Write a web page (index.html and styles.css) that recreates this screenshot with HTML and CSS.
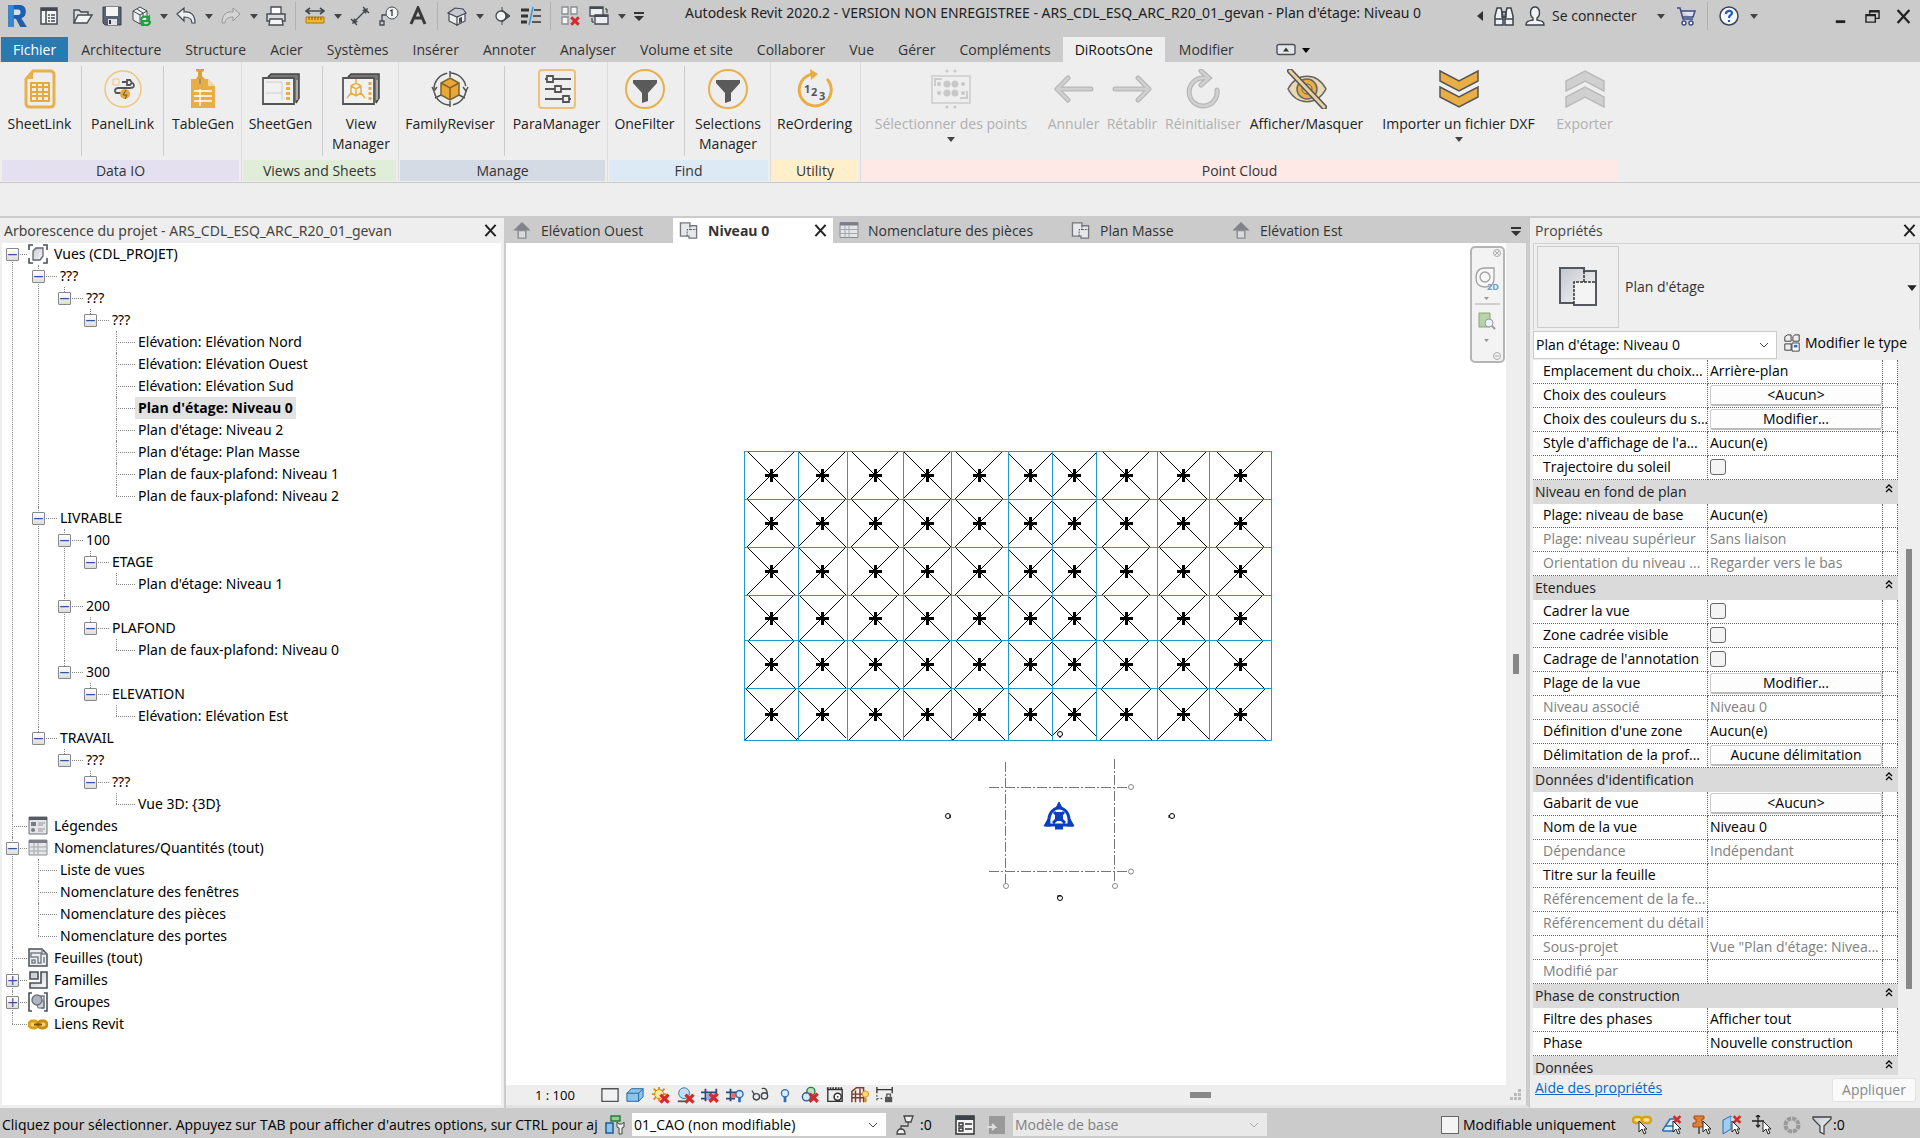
FILE: index.html
```html
<!DOCTYPE html>
<html lang="fr">
<head>
<meta charset="utf-8">
<title>Autodesk Revit 2020.2 - Plan d'étage: Niveau 0</title>
<link rel="stylesheet" href="styles.css">
</head>
<body>
<svg class="defs" width="0" height="0" aria-hidden="true">
  <defs>
    <linearGradient id="steel" x1="0" y1="0" x2="1" y2="1"><stop offset="0" stop-color="#c3c7cf"/><stop offset="1" stop-color="#fafafa"/></linearGradient>
    <symbol id="caret" viewBox="0 0 8 6"><path d="M0 1h8L4 6z" fill="currentColor"/></symbol>
    <symbol id="cross" viewBox="0 0 14 14"><path d="M1.500 1l11 12M12.500 1l-11 12" stroke="currentColor" stroke-width="2.200" fill="none"/></symbol>
    <symbol id="chevron" viewBox="0 0 10 6"><path d="M1 1l4 4 4-4" stroke="currentColor" fill="none"/></symbol>
    <symbol id="collapse" viewBox="0 0 8 9"><path d="M1 4l3-3 3 3M1 8l3-3 3 3" stroke="#000" stroke-width="1.300" fill="none"/></symbol>
    <symbol id="menu" viewBox="0 0 10 9"><path d="M0 0h10v2H0zM0 4h10L5 9z" fill="#333"/></symbol>
    <symbol id="redx" viewBox="0 0 8 8"><path d="M1 1l6 6M7 1l-6 6" stroke="#d42a2a" stroke-width="2.400" fill="none"/></symbol>
    <symbol id="pointer" viewBox="0 0 10 15"><path d="M1 1v11l3-3 2 5 2-1-2-4h3z" fill="#fff" stroke="#222"/></symbol>
    <symbol id="elev" viewBox="0 0 20 20"><path d="M10 1L1 10h5v3h8v-3h5z" fill="#808387"/><path d="M6 10h8v8H6z" fill="#d8dadd" stroke="#8a8c90" stroke-width="1.500"/></symbol>
    <symbol id="plan" viewBox="0 0 20 20"><path d="M1 2h10v3h7v13H10v-2H1z" fill="#e6e8ec" stroke="#74777d" stroke-width="1.400"/><path d="M11 5v4H8v7" fill="none" stroke="#4c5058" stroke-dasharray="2 1"/><path d="M11 9h7" stroke="#4c5058" stroke-dasharray="2 1"/></symbol>
    <symbol id="sched" viewBox="0 0 20 18"><path d="M1 1h18v15H1z" fill="#e4e5e8" stroke="#8a8c90"/><path d="M1 1h18v3H1z" fill="#7b7e84"/><path d="M6 4v12M10 4v12M1 8h18M1 12h18" stroke="#a5a8ad"/></symbol>
    <symbol id="funnel" viewBox="0 0 40 40"><circle cx="20" cy="20" r="19" fill="none" stroke="#e8b04a" stroke-width="2"/><path d="M8 11h24v3L23 24v8l-6 2V24L8 14z" fill="#5a5a5a"/></symbol>
  </defs>
</svg>

<header class="titlebar">
  <div class="quick">
    <button aria-label="Revit" class="qb logo"><svg viewBox="0 0 20 22"><path d="M2 1h10c4 0 6 2 6 6 0 3-1 5-4 6l5 8h-6L9 13.500H7V21H2z" fill="#1c5fae"/><path d="M7 5v5h4c3 0 3-5 0-5z" fill="#d2e2f2"/><path d="M2 1h5v20H2z" fill="#3b86cf"/></svg></button>
    <button aria-label="Accueil" class="qb"><svg viewBox="0 0 20 20"><path d="M2 2h16v16H2z" fill="#f4f4f4" stroke="#454a52" stroke-width="1.500"/><path d="M2 2h16v3H2z" fill="#454a52"/><path d="M7 5v13M9 9h2m1 0h4M9 12h2m1 0h4M9 15h2m1 0h4" stroke="#454a52" stroke-width="1.500"/></svg></button>
    <button aria-label="Ouvrir" class="qb wide"><svg viewBox="0 0 20 20"><path d="M1 17V4h5l2 2h7v3" fill="#ddd" stroke="#454a52" stroke-width="1.400"/><path d="M1 17L5 9h14l-5 8z" fill="#f4f4f4" stroke="#454a52" stroke-width="1.400"/></svg></button>
    <button aria-label="Enregistrer" class="qb"><svg viewBox="0 0 20 20"><path d="M1 1h18v18H3l-2-2z" fill="#5a6170" stroke="#3b414c"/><path d="M4 1h12v9H4z" fill="#f4f4f4"/><path d="M6 13h9v6H6z" fill="#e0e2e6"/><path d="M8 14v4" stroke="#333" stroke-width="2"/></svg></button>
    <button aria-label="Synchroniser" class="qb"><svg viewBox="0 0 20 20"><path d="M2 5l7-4 7 4v9l-7 4-7-4z" fill="#eceef0" stroke="#454a52"/><path d="M2 5l7 4 7-4M9 9v9M6 3l6 4v4" fill="none" stroke="#454a52"/><path d="M10 14a4 4 0 0 1 7-2l1-1v4h-4M19 15a4 4 0 0 1-7 3l-1 1v-4h4" fill="none" stroke="#1aa33c" stroke-width="2.200"/></svg></button>
    <svg class="tri"><use href="#caret"/></svg>
    <button aria-label="Annuler" class="qb"><svg viewBox="0 0 20 20"><path d="M1 8l7-6v4c7-1 11 3 11 11h-3c0-4-3-6-8-6v4z" fill="#eceef0" stroke="#454a52" stroke-width="1.200"/></svg></button>
    <svg class="tri"><use href="#caret"/></svg>
    <button aria-label="Rétablir" class="qb"><svg viewBox="0 0 20 20"><path d="M19 8l-7-6v4C5 5 1 9 1 17h3c0-4 3-6 8-6v4z" fill="#d5d5d5" stroke="#999"/></svg></button>
    <svg class="tri"><use href="#caret"/></svg>
    <button aria-label="Imprimer" class="qb"><svg viewBox="0 0 20 20"><path d="M5 8V1h10v7" fill="#fff" stroke="#454a52" stroke-width="1.300"/><path d="M1 8h18v7H1z" fill="#d8dade" stroke="#454a52" stroke-width="1.400"/><path d="M4 13h12l1 6H3z" fill="#f4f4f4" stroke="#454a52" stroke-width="1.300"/></svg></button>
    <i class="vsep"></i>
    <button aria-label="Mesurer" class="qb"><svg viewBox="0 0 20 20"><path d="M1 5h18M5 2L1 5l4 3M15 2l4 3-4 3" fill="none" stroke="#454a52" stroke-width="1.600"/><path d="M1 11h18v6H1z" fill="#f7b731" stroke="#a9780c"/><path d="M4 11v3m3-3v3m3-3v3m3-3v3m3-3v3" stroke="#7a5605"/></svg></button>
    <svg class="tri"><use href="#caret"/></svg>
    <button aria-label="Cote alignée" class="qb"><svg viewBox="0 0 20 20"><path d="M4 16L16 4M1 13l6 6M13 1l6 6" stroke="#454a52" stroke-width="1.400"/><path d="M2 18l2-6 4 4zM18 2l-6 2 4 4z" fill="#454a52"/></svg></button>
    <button aria-label="Étiquette" class="qb"><svg viewBox="0 0 20 20"><circle cx="13" cy="7" r="6" fill="#f4f4f4" stroke="#454a52"/><path d="M11 5l2-1v6" fill="none" stroke="#333" stroke-width="1.300"/><path d="M7 9H3v6M1 15h4v4H1z" fill="none" stroke="#454a52" stroke-width="1.300"/></svg></button>
    <button aria-label="Texte" class="qb"><svg viewBox="0 0 20 20"><path d="M3 18L10 2l7 16M6 12h8" fill="none" stroke="#3a3a3a" stroke-width="3"/></svg></button>
    <i class="vsep"></i>
    <button aria-label="Vue 3D par défaut" class="qb"><svg viewBox="0 0 20 20"><path d="M2 7l8 3v9l-8-4zM10 10l8-3v8l-8 4z" fill="#eceef0" stroke="#454a52" stroke-width="1.200"/><path d="M1 7l7-5 8 1 3 4-9 4z" fill="#c5c9d0" stroke="#454a52" stroke-width="1.200"/><path d="M12 12l3-1v5l-3 1z" fill="#454a52"/></svg></button>
    <svg class="tri"><use href="#caret"/></svg>
    <button aria-label="Coupe" class="qb"><svg viewBox="0 0 20 20"><path d="M10 1v18M10 4l8 6-8 6z" fill="#454a52" stroke="#454a52"/><circle cx="9" cy="10" r="5" fill="#f4f4f4" stroke="#454a52" stroke-width="1.300"/></svg></button>
    <button aria-label="Lignes fines" class="qb"><svg viewBox="0 0 20 20"><path d="M0 4h8M0 10h7M0 16h6" stroke="#333" stroke-width="3"/><path d="M13 4h7M12 10h8M11 16h9" stroke="#333" stroke-width="1.500"/><path d="M12 1L8 19" stroke="#3d95e0" stroke-width="1.500"/></svg></button>
    <i class="vsep"></i>
    <button aria-label="Fermer les vues inactives" class="qb"><svg viewBox="0 0 20 20"><path d="M2 1h6v7H2zM11 1h6v7h-6zM2 11h6v7H2z" fill="#f4f4f4" stroke="#8a8d93" stroke-width="1.300"/><use href="#redx" x="10" y="10" width="10" height="10"/></svg></button>
    <button aria-label="Changer de fenêtre" class="qb"><svg viewBox="0 0 20 20"><path d="M1 1h13v9H1zM6 9h13v9H6z" fill="#eceef0" stroke="#454a52" stroke-width="1.300"/><path d="M1 2h13M6 10h13" stroke="#454a52" stroke-width="2"/><path d="M16 3h2v4M3 12v4h2" stroke="#333" fill="none"/></svg></button>
    <svg class="tri"><use href="#caret"/></svg>
    <svg class="menu-glyph"><use href="#menu"/></svg>
  </div>
  <h1>Autodesk Revit 2020.2 - VERSION NON ENREGISTREE - ARS_CDL_ESQ_ARC_R20_01_gevan - Plan d'étage: Niveau 0</h1>
  <div class="account">
    <svg class="left-tri" viewBox="0 0 6 10"><path d="M6 0v10L0 5z" fill="#333"/></svg>
    <button aria-label="Rechercher" class="qb"><svg viewBox="0 0 20 20"><path d="M3 2h4l2 8v9H1v-9zM13 2h4l2 8v9h-8v-9z" fill="#f0f1f3" stroke="#3c424c" stroke-width="1.500"/><path d="M8 6h4v5H8zM1 13h8M11 13h8" fill="none" stroke="#3c424c" stroke-width="1.500"/></svg></button>
    <button class="login"><svg viewBox="0 0 20 20"><path d="M1 19c0-4 3-4 7-5v-2c-4-3-3-11 2-11s6 8 2 11v2c4 1 7 1 7 5z" fill="#f2f2f4" stroke="#3c424c" stroke-width="1.400"/></svg>Se connecter</button>
    <svg class="tri"><use href="#caret"/></svg>
    <button aria-label="App Store" class="qb"><svg viewBox="0 0 20 20"><path d="M1 2h3l3 11h10M5 5h14l-2 6H7" fill="#dfe3ee" stroke="#3d4c80" stroke-width="1.500"/><circle cx="8" cy="17" r="2" fill="#fff" stroke="#3d4c80" stroke-width="1.400"/><circle cx="15" cy="17" r="2" fill="#fff" stroke="#3d4c80" stroke-width="1.400"/></svg></button>
    <i class="vsep"></i>
    <button aria-label="Aide" class="qb"><svg viewBox="0 0 20 20"><circle cx="10" cy="10" r="9" fill="#f6f8fc" stroke="#3c4658" stroke-width="1.500"/><path d="M7 8c0-4 6-4 6-1 0 2-3 2-3 5M10 14v2" fill="none" stroke="#2458b8" stroke-width="2.200"/></svg></button>
    <svg class="tri"><use href="#caret"/></svg>
  </div>
  <div class="winctl">
    <button aria-label="Réduire"><svg viewBox="0 0 16 16"><path d="M3 12h10v3H3z" fill="#222"/></svg></button>
    <button aria-label="Restaurer"><svg viewBox="0 0 16 16"><path d="M5 5V2h10v8h-4M1 6h10v8H1z" fill="none" stroke="#222" stroke-width="1.500"/><path d="M5 2.500h10M1 6.500h10" stroke="#222" stroke-width="2.500"/></svg></button>
    <button aria-label="Fermer"><svg viewBox="0 0 14 14"><use href="#cross"/></svg></button>
  </div>
</header>

<nav class="tabs">
  <a class="file" href="#">Fichier</a><a href="#">Architecture</a><a href="#">Structure</a><a href="#">Acier</a><a href="#">Systèmes</a><a href="#">Insérer</a><a href="#">Annoter</a><a href="#">Analyser</a><a href="#">Volume et site</a><a href="#">Collaborer</a><a href="#">Vue</a><a href="#">Gérer</a><a href="#">Compléments</a><a class="active" href="#">DiRootsOne</a><a href="#">Modifier</a>
  <button aria-label="Réduire le ruban" class="minribbon"><svg viewBox="0 0 20 12"><rect x="1" y="1" width="18" height="10" rx="2" fill="#e4e6ea" stroke="#4a4f58" stroke-width="1.400"/><path d="M7 8l3-4 3 4z" fill="#333"/></svg><svg class="tri dark"><use href="#caret"/></svg></button>
</nav>

<section class="ribbon">
  <div class="panel p-data">
    <div class="tools">
      <button><svg viewBox="0 0 40 40"><path d="M13 2h17q4 0 4 4v28q0 4-4 4H10q-4 0-4-4V10z" fill="#eee" stroke="#e8b04a" stroke-width="3"/><path d="M13 2v8H6z" fill="#e8b04a"/><path d="M11 14h18v18H11zM17 14v18M23 14v18M11 18h18M11 23h18M11 27h18" fill="none" stroke="#e8a93a" stroke-width="2"/></svg>SheetLink</button>
      <button><svg viewBox="0 0 40 40"><circle cx="20" cy="20" r="18" fill="none" stroke="#efc67c" stroke-width="1.500"/><path d="M10 10h6v6h-6z" fill="none" stroke="#efc67c"/><path d="M19 13h5m0-2v5h3l2-2-2-3zM30 14q3 5-3 5H15q-5 1-2 5h6" fill="none" stroke="#555" stroke-width="1.800"/><circle cx="22" cy="25" r="5" fill="#e8a93a"/><path d="M23 21l-3 5h4l-2 4" stroke="#555" fill="none"/></svg>PanelLink</button>
      <button><svg viewBox="0 0 40 40"><path d="M8 10h17l7 7v22H8z" fill="#e8ae45"/><path d="M25 10v7h7z" fill="#f2d9a8"/><path d="M11 22h18M11 27h18M11 32h18M17 20v17" stroke="#fff" stroke-width="1.500"/><path d="M13 0h8v2l-2 1v4l3 3h-9l2-3V3l-2-1z" fill="#dba13c"/><path d="M17 10v5" stroke="#888" stroke-width="1.500"/></svg>TableGen</button>
    </div>
    <h2>Data IO</h2>
  </div>
  <div class="panel p-views">
    <div class="tools">
      <button><svg viewBox="0 0 40 40"><path d="M7 8l3-3h28v24l-3 5" fill="#777" stroke="#444" stroke-width="1.500"/><path d="M2 9h31v26H2z" fill="#f1f1f1" stroke="#555" stroke-width="1.800"/><path d="M5 13h16v18M5 24h16" stroke="#ccc" fill="none"/><path d="M27 13v20" stroke="#e8ae45" stroke-width="4" stroke-dasharray="3 2"/><path d="M36 11v20" stroke="#ddd"/></svg>SheetGen</button>
      <button><svg viewBox="0 0 40 40"><path d="M7 8l3-3h28v24l-3 5" fill="#777" stroke="#444" stroke-width="1.500"/><path d="M2 9h31v26H2z" fill="#f1f1f1" stroke="#555" stroke-width="1.800"/><path d="M10 17l5-3 5 3v7l-5 3-5-3zM10 17l5 3 5-3M15 20v7M15 14v-4M10 24l-4 5M20 24l4 5" stroke="#e8ae45" stroke-width="1.500" fill="none"/><path d="M29 13v20" stroke="#e8ae45" stroke-width="3" stroke-dasharray="3 2"/><path d="M36 11v20" stroke="#ddd"/></svg>View<br>Manager</button>
    </div>
    <h2>Views and Sheets</h2>
  </div>
  <div class="panel p-manage">
    <div class="tools">
      <button><svg viewBox="0 0 40 40"><circle cx="20" cy="20" r="16" fill="none" stroke="#555" stroke-width="1.500" stroke-dasharray="22 3"/><path d="M20 9l9 5v12l-9 5-9-5V14z" fill="#eca732" stroke="#7b6434" stroke-width="1.500"/><path d="M11 14l9 5 9-5M20 19v12" fill="none" stroke="#7b6434" stroke-width="1.500"/><path d="M20 2v6M20 32v6M5 29l6-3M35 29l-6-3M2 18l2 4 3-4M33 18l3 4 2-4" fill="none" stroke="#555" stroke-width="1.500"/></svg>FamilyReviser</button>
      <button><svg viewBox="0 0 40 40"><rect x="2" y="1" width="36" height="38" rx="3" fill="none" stroke="#efc078" stroke-width="2"/><path d="M8 10h26M8 20h26M8 30h26" stroke="#555" stroke-width="1.800"/><path d="M10 7h6v6h-6zM18 17h6v6h-6zM26 27h6v6h-6z" fill="#eee" stroke="#555" stroke-width="1.800"/></svg>ParaManager</button>
    </div>
    <h2>Manage</h2>
  </div>
  <div class="panel p-find">
    <div class="tools">
      <button><svg><use href="#funnel"/></svg>OneFilter</button>
      <button><svg><use href="#funnel"/></svg>Selections<br>Manager</button>
    </div>
    <h2>Find</h2>
  </div>
  <div class="panel p-utility">
    <div class="tools">
      <button><svg viewBox="0 0 40 40"><path d="M32 10a16 16 0 1 1-14-5" fill="none" stroke="#e8ae45" stroke-width="3"/><path d="M15 0l8 5-7 6z" fill="#e8ae45"/><text x="9" y="24" class="digits">1</text><text x="16" y="27" class="digits">2</text><text x="24" y="31" class="digits">3</text></svg>ReOrdering</button>
    </div>
    <h2>Utility</h2>
  </div>
  <div class="panel p-cloud">
    <div class="tools">
      <button disabled><svg viewBox="0 0 40 40"><path d="M1 7h38v27H1z" fill="none" stroke="#ccc" stroke-width="1.500"/><g fill="#c8c8c8"><circle cx="16" cy="15" r="3.500"/><circle cx="24" cy="15" r="3.500"/><circle cx="16" cy="24" r="3.500"/><circle cx="24" cy="24" r="3.500"/><circle cx="8" cy="15" r="2"/><circle cx="32" cy="15" r="2"/><circle cx="8" cy="24" r="2"/><circle cx="32" cy="24" r="2"/><circle cx="16" cy="2" r="1.500"/><circle cx="24" cy="2" r="1.500"/><circle cx="16" cy="38" r="1.500"/><circle cx="24" cy="38" r="1.500"/></g><path d="M4 17v-7h7M29 29h7v-7" fill="none" stroke="#ccc" stroke-width="2"/></svg>Sélectionner des points<svg class="tri"><use href="#caret"/></svg></button>
      <button disabled><svg viewBox="0 0 40 40"><path d="M37 20H4M14 9L3 20l11 11" fill="none" stroke="#b8b8b8" stroke-width="5" stroke-linecap="round" stroke-linejoin="round"/><path d="M37 20H4M14 9L3 20l11 11" fill="none" stroke="#d0d0d0" stroke-width="2.500" stroke-linecap="round"/></svg>Annuler</button>
      <button disabled><svg viewBox="0 0 40 40"><path d="M3 20h33M26 9l11 11-11 11" fill="none" stroke="#b8b8b8" stroke-width="5" stroke-linecap="round" stroke-linejoin="round"/><path d="M3 20h33M26 9l11 11-11 11" fill="none" stroke="#d0d0d0" stroke-width="2.500" stroke-linecap="round"/></svg>Rétablir</button>
      <button disabled><svg viewBox="0 0 40 40"><path d="M34 21a14 14 0 1 1-14-12h4M18 2l8 7-8 7" fill="none" stroke="#b8b8b8" stroke-width="5" stroke-linecap="round"/><path d="M34 21a14 14 0 1 1-14-12h4M18 2l8 7-8 7" fill="none" stroke="#d0d0d0" stroke-width="2.500" stroke-linecap="round"/></svg>Réinitialiser</button>
      <button><svg viewBox="0 0 40 40"><path d="M1 20C10 3 30 3 39 20 30 37 10 37 1 20z" fill="#ead8b4" stroke="#666" stroke-width="1.500"/><circle cx="20" cy="20" r="10" fill="#e8ae45" stroke="#666" stroke-width="1.500"/><circle cx="20" cy="20" r="5" fill="#edbe68" stroke="#666"/><path d="M3 2l34 36" stroke="#555" stroke-width="6" stroke-linecap="round"/><path d="M3 2l34 36" stroke="#e8d0a0" stroke-width="3" stroke-linecap="round"/></svg>Afficher/Masquer</button>
      <button><svg viewBox="0 0 40 40"><path d="M1 2l19 10L39 2v10L20 22 1 12zM1 18l19 10 19-10v10L20 38 1 28z" fill="#e8ae45" stroke="#555" stroke-width="1.500"/></svg>Importer un fichier DXF<svg class="tri"><use href="#caret"/></svg></button>
      <button disabled><svg viewBox="0 0 40 40"><path d="M1 22L20 12l19 10V12L20 2 1 12zM1 38l19-10 19 10V28L20 18 1 28z" fill="#d0d0d0" stroke="#bbb" stroke-width="1.500"/></svg>Exporter</button>
    </div>
    <h2>Point Cloud</h2>
  </div>
</section>
<div class="optionbar"></div>

<main class="workspace">
  <aside class="browser">
    <header class="dock"><h2>Arborescence du projet - ARS_CDL_ESQ_ARC_R20_01_gevan</h2><button aria-label="Fermer l'arborescence"><svg><use href="#cross"/></svg></button></header>
    <ul class="tree root">
      <li><div class="row"><button class="ex" aria-label="Réduire">−</button><svg class="ico" viewBox="0 0 20 20"><path d="M1 6V1h4M15 1h4v5M19 14v5h-4M5 19H1v-5" fill="none" stroke="#4a4f58" stroke-width="1.600"/><path d="M5 7l3-3h7v8l-3 4H5z" fill="url(#steel)" stroke="#5f6570" stroke-width="1.300"/></svg>Vues (CDL_PROJET)</div>
        <ul>
          <li><div class="row"><button class="ex" aria-label="Réduire">−</button>???</div>
            <ul><li><div class="row"><button class="ex" aria-label="Réduire">−</button>???</div>
              <ul><li><div class="row"><button class="ex" aria-label="Réduire">−</button>???</div>
                <ul>
                  <li><div class="row leaf">Elévation: Elévation Nord</div></li>
                  <li><div class="row leaf">Elévation: Elévation Ouest</div></li>
                  <li><div class="row leaf">Elévation: Elévation Sud</div></li>
                  <li><div class="row leaf"><b>Plan d'étage: Niveau 0</b></div></li>
                  <li><div class="row leaf">Plan d'étage: Niveau 2</div></li>
                  <li><div class="row leaf">Plan d'étage: Plan Masse</div></li>
                  <li><div class="row leaf">Plan de faux-plafond: Niveau 1</div></li>
                  <li><div class="row leaf">Plan de faux-plafond: Niveau 2</div></li>
                </ul></li></ul></li></ul></li>
          <li><div class="row"><button class="ex" aria-label="Réduire">−</button>LIVRABLE</div>
            <ul>
              <li><div class="row"><button class="ex" aria-label="Réduire">−</button>100</div>
                <ul><li><div class="row"><button class="ex" aria-label="Réduire">−</button>ETAGE</div>
                  <ul><li><div class="row leaf">Plan d'étage: Niveau 1</div></li></ul></li></ul></li>
              <li><div class="row"><button class="ex" aria-label="Réduire">−</button>200</div>
                <ul><li><div class="row"><button class="ex" aria-label="Réduire">−</button>PLAFOND</div>
                  <ul><li><div class="row leaf">Plan de faux-plafond: Niveau 0</div></li></ul></li></ul></li>
              <li><div class="row"><button class="ex" aria-label="Réduire">−</button>300</div>
                <ul><li><div class="row"><button class="ex" aria-label="Réduire">−</button>ELEVATION</div>
                  <ul><li><div class="row leaf">Elévation: Elévation Est</div></li></ul></li></ul></li>
            </ul></li>
          <li><div class="row"><button class="ex" aria-label="Réduire">−</button>TRAVAIL</div>
            <ul><li><div class="row"><button class="ex" aria-label="Réduire">−</button>???</div>
              <ul><li><div class="row"><button class="ex" aria-label="Réduire">−</button>???</div>
                <ul><li><div class="row leaf">Vue 3D: {3D}</div></li></ul></li></ul></li></ul></li>
        </ul></li>
      <li><div class="row leaf"><svg class="ico" viewBox="0 0 20 20"><path d="M1 1h18v17H1z" fill="#e4e5e8" stroke="#6d7178"/><path d="M1 1h18v3H1z" fill="#555a63"/><path d="M3 6h5v4H3z" fill="#777c86"/><circle cx="5" cy="14" r="2" fill="#777c86"/><path d="M10 7h7M10 9h5M10 13h7M10 15h5" stroke="#999"/></svg>Légendes</div></li>
      <li><div class="row"><button class="ex" aria-label="Réduire">−</button><svg class="ico"><use href="#sched"/></svg>Nomenclatures/Quantités (tout)</div>
        <ul>
          <li><div class="row leaf">Liste de vues</div></li>
          <li><div class="row leaf">Nomenclature des fenêtres</div></li>
          <li><div class="row leaf">Nomenclature des pièces</div></li>
          <li><div class="row leaf">Nomenclature des portes</div></li>
        </ul></li>
      <li><div class="row leaf"><svg class="ico" viewBox="0 0 20 20"><path d="M1 1h13l5 5v12H1z" fill="#eceef0" stroke="#4a4f58" stroke-width="1.500"/><path d="M14 1v5h5M3 5h10v10h-3V9H3zM4 12h3v3H4zM16 9v6" fill="none" stroke="#7a808a" stroke-width="1.500"/></svg>Feuilles (tout)</div></li>
      <li><div class="row"><button class="ex" aria-label="Développer">+</button><svg class="ico" viewBox="0 0 20 20"><path d="M2 2h8v7H2zM13 2h6v16H2v-5h11z" fill="url(#steel)" stroke="#4a4f58" stroke-width="1.600"/></svg>Familles</div></li>
      <li><div class="row"><button class="ex" aria-label="Développer">+</button><svg class="ico" viewBox="0 0 20 20"><path d="M4 1H1v18h3M16 1h3v18h-3" fill="none" stroke="#4a4f58" stroke-width="1.600"/><path d="M8 9h8v7h-6z" fill="#d0d3d9" stroke="#6d737d"/><circle cx="9" cy="8" r="5" fill="#aeb6c3" stroke="#6d737d" stroke-width="1.400"/><path d="M12 4h4v12h-3" fill="none" stroke="#6d737d" stroke-width="1.400"/></svg>Groupes</div></li>
      <li><div class="row leaf"><svg class="ico" viewBox="0 0 20 20"><rect x="1" y="7" width="9" height="7" rx="3.500" fill="#f3d27a" stroke="#d9a013" stroke-width="2.800"/><rect x="10" y="7" width="9" height="7" rx="3.500" fill="#f3d27a" stroke="#c78c08" stroke-width="2.800"/><path d="M6 10.500h8" stroke="#7b5505" stroke-width="2"/></svg>Liens Revit</div></li>
    </ul>
  </aside>

  <section class="viewport">
    <nav class="viewtabs">
      <a href="#" class="t-elev"><svg><use href="#elev"/></svg>Elévation Ouest</a>
      <a href="#" class="t-plan on"><svg><use href="#plan"/></svg>Niveau 0<svg class="x"><use href="#cross"/></svg></a>
      <a href="#" class="t-sched"><svg><use href="#sched"/></svg>Nomenclature des pièces</a>
      <a href="#" class="t-plan"><svg><use href="#plan"/></svg>Plan Masse</a>
      <a href="#" class="t-last"><svg><use href="#elev"/></svg>Elévation Est</a>
      <button aria-label="Liste des vues"><svg><use href="#menu"/></svg></button>
    </nav>
    <div class="stage">
      <div class="canvas">
        <svg class="drawing" viewBox="506 243 1000 842" role="img" aria-label="Plan d'étage niveau 0">
          <defs>
            <path id="plus" d="M-6.500 0h13M0-6.500v13" stroke-width="3"/>
            <g id="pluses"><use href="#plus" x="771.500"/><use href="#plus" x="822.500"/><use href="#plus" x="875.500"/><use href="#plus" x="927.500"/><use href="#plus" x="979.500"/><use href="#plus" x="1030.500"/><use href="#plus" x="1074.500"/><use href="#plus" x="1126.500"/><use href="#plus" x="1183.500"/><use href="#plus" x="1240.500"/></g>
            <g id="cells"><path d="M747-24l48 48m0-48l-48 48M798-24l48 48m0-48l-48 48M851-24l48 48m0-48l-48 48M903-24l48 48m0-48l-48 48M955-24l48 48m0-48l-48 48M1008-22l44 44m0-44l-44 44M1052-22l44 44m0-44l-44 44M1102-24l48 48m0-48l-48 48M1159-24l48 48m0-48l-48 48M1216-24l48 48m0-48l-48 48"/></g>
            <g id="cells-tall"><path d="M745-26l52 52m0-52l-52 52M798-24l48 48m0-48l-50 50M849-26l52 52m0-52l-52 52M903-24l50 50m-2-50l-48 48M953-26l52 52m0-52l-52 52M1008-22l44 44m0-44l-44 44M1052-22l44 44m0-44l-44 44M1100-26l52 52m0-52l-52 52M1158-26l51 51m0-51l-52 52M1214-26l52 52m0-52l-52 52"/></g>
            <clipPath id="short"><path d="M744-22h528v44H744z"/></clipPath>
          </defs>
          <g fill="none" stroke="#000" shape-rendering="crispEdges">
            <use href="#cells" y="475"/><use href="#cells" y="523"/><use href="#cells" y="571"/><g transform="translate(0 618)"><use href="#cells" clip-path="url(#short)"/></g><use href="#cells" y="664"/><use href="#cells-tall" y="714"/>
          </g>
          <path d="M744.500 451v290M798.500 451v290M847.500 451v290M903.500 451v290M951.500 451v290M1008.500 451v290M1052.500 451v290M1096.500 451v290M1157.500 451v290M1209.500 451v290M1271.500 451v290M744 451.500h528M744 499.500h528M744 547.500h528M744 595.500h528M744 640.500h528M744 688.500h528M744 740.500h528" stroke="#1c9ccb" fill="none" shape-rendering="crispEdges"/>
          <g stroke="#000" shape-rendering="crispEdges"><use href="#pluses" y="475.500"/><use href="#pluses" y="523.500"/><use href="#pluses" y="571.500"/><use href="#pluses" y="618.500"/><use href="#pluses" y="664.500"/><use href="#pluses" y="714.500"/></g>
          <path d="M1005.500 762v121M1114.500 759v124M989 787.500h140M989 871.500h140" stroke="#777" fill="none" stroke-dasharray="10 2 2 2" shape-rendering="crispEdges"/>
          <g fill="#fff" stroke="#888"><circle cx="1006" cy="886" r="2.500"/><circle cx="1115" cy="886" r="2.500"/><circle cx="1131" cy="787" r="2.500"/><circle cx="1131" cy="871.500" r="2.500"/></g>
          <g fill="#fff" stroke="#000"><circle cx="1060" cy="734" r="2.500"/><circle cx="948" cy="816" r="2.500"/><circle cx="1172" cy="816" r="2.500"/><circle cx="1060" cy="898" r="2.500"/></g>
          <path d="M1060 736v2M950 815v3M1169 815v3M1057 896h4" stroke="#000"/>
          <g fill="none" stroke="#0a3fc4" stroke-width="3">
            <path d="M1049 823c-1-9 4-15 10-15s11 6 10 15"/>
            <path d="M1054 812l11 11M1064 812l-11 11M1046 825h27M1055 828h8"/>
            <path d="M1059 802l-3 6h6zM1044 826l4-7 3 7zM1074 826l-4-7-3 7z" fill="#0a3fc4" stroke-width="1"/>
            <rect x="1056" y="813" width="6" height="7" fill="#0a3fc4" stroke-width="2"/>
          </g>
        </svg>
        <div class="navbar">
          <svg viewBox="0 0 35 117"><rect x="1" y="1" width="33" height="115" rx="4" fill="#f3f3f3" stroke="#b5b5b5" stroke-width="2"/><circle cx="27" cy="7" r="3.500" fill="none" stroke="#aaa"/><path d="M25 5l4 4M29 5l-4 4M5 58h25M25 110h4" stroke="#aaa"/><circle cx="27" cy="110" r="3.500" fill="none" stroke="#aaa"/><path d="M15 22h9v11q0 8-9 8-9 0-9-9 0-10 9-10z" fill="#f8f8f8" stroke="#a0a0a0" stroke-width="1.300"/><circle cx="15" cy="31" r="5" fill="none" stroke="#a0a0a0" stroke-width="1.300"/><text x="17" y="44" class="twod">2D</text><path d="M14 51h5l-2.500 3zM14 93h5l-2.500 3z" fill="#999"/><path d="M9 67h11v14H9z" fill="#b9d2a8" stroke="#86a873"/><circle cx="19" cy="77" r="4" fill="#eef3f8" stroke="#999"/><path d="M22 80l3 3" stroke="#999" stroke-width="2"/></svg>
        </div>
      </div>
      <div class="vscroll"><i></i></div>
    </div>
    <footer class="viewbar">
      <button class="scale">1 : 100</button>
      <div class="viewicons">
        <svg viewBox="0 0 20 20"><path d="M1 3h18v14H1z" fill="#f1f2f4" stroke="#555" stroke-width="1.500"/></svg>
        <svg viewBox="0 0 20 20"><path d="M1 8l5-5h13v9l-5 5H1z" fill="#8cc4ee" stroke="#1c5c96"/><path d="M1 8h13v9M14 8l5-5" fill="none" stroke="#1c5c96"/></svg>
        <svg viewBox="0 0 20 20"><path d="M9 1v16M1 9h16M3 3l12 12M15 3L3 15" stroke="#d9900c" stroke-width="2"/><circle cx="9" cy="9" r="5" fill="#ffe9a0" stroke="#c8860a"/><use href="#redx" x="9" y="8" width="12" height="12"/></svg>
        <svg viewBox="0 0 20 20"><circle cx="9" cy="8" r="6" fill="#bfe0f6" stroke="#356b9b"/><path d="M2 17h10" stroke="#555" stroke-width="2"/><use href="#redx" x="9" y="8" width="12" height="12"/></svg>
        <svg viewBox="0 0 20 20"><path d="M0 7h18M5 3v14M0 14h12M17 3v8" stroke="#2a4a78" stroke-width="2"/><path d="M6 8h10v7H6z" fill="#7fb8e8"/><use href="#redx" x="8" y="7" width="12" height="12"/></svg>
        <svg viewBox="0 0 20 20"><path d="M0 7h16M5 3v14M0 14h10" stroke="#2a4a78" stroke-width="2"/><path d="M6 8h6v5H6z" fill="#e66"/><circle cx="15" cy="9" r="4" fill="#cfe6fa" stroke="#2d6db0" stroke-width="1.500"/><path d="M15 13v5" stroke="#2d6db0" stroke-width="3"/></svg>
        <svg viewBox="0 0 20 20"><path d="M1 5l3 5M12 3q6-2 6 6" fill="none" stroke="#444" stroke-width="1.500"/><circle cx="6" cy="12" r="3.500" fill="#e9edf2" stroke="#444" stroke-width="1.500"/><circle cx="15" cy="11" r="3.500" fill="#e9edf2" stroke="#444" stroke-width="1.500"/></svg>
        <svg viewBox="0 0 20 20"><circle cx="10" cy="8" r="4" fill="#d8ecfb" stroke="#2d6db0" stroke-width="1.400"/><path d="M10 12v6" stroke="#2d6db0" stroke-width="3"/></svg>
        <svg viewBox="0 0 20 20"><circle cx="11" cy="6" r="4.500" fill="#bde3c5" stroke="#2b7a3d" stroke-width="1.500"/><circle cx="6" cy="12" r="4.500" fill="#d3e8f8" stroke="#2a5c8a" stroke-width="1.500"/><use href="#redx" x="8" y="7" width="12" height="12"/></svg>
        <svg viewBox="0 0 20 20"><path d="M2 4h16v13H2z" fill="#eee" stroke="#333" stroke-width="1.500"/><path d="M1 3h17" stroke="#333" stroke-width="3" stroke-dasharray="2 1"/><circle cx="13" cy="12" r="4" fill="#fff" stroke="#333" stroke-width="1.800"/><circle cx="13" cy="12" r="1" fill="#333"/></svg>
        <svg viewBox="0 0 20 20"><path d="M1 18V6l5-4h8v16M1 9h13M1 13h13M5 5v13M10 3v15" fill="none" stroke="#7a3a30" stroke-width="1.600"/><circle cx="16" cy="9" r="3.500" fill="#ffd97a" stroke="#d48b0a"/><path d="M16 13v5" stroke="#d48b0a" stroke-width="2.500"/></svg>
        <svg viewBox="0 0 20 20"><path d="M1 1v7M18 1v7M1 4h17" stroke="#333" stroke-width="1.500"/><path d="M1 10v8M1 14h8" stroke="#333" stroke-dasharray="2 2"/><path d="M10 12h8v6h-8z" fill="#555"/><path d="M12 12V9h4v3" fill="none" stroke="#555" stroke-width="1.500"/></svg>
      </div>
      <div class="hscroll"><i></i></div>
      <svg class="grip" viewBox="0 0 12 12"><path d="M8 0h3v3H8zM4 4h3v3H4zM8 4h3v3H8zM0 8h3v3H0zM4 8h3v3H4zM8 8h3v3H8z" fill="#bbb"/></svg>
    </footer>
  </section>

  <aside class="props">
    <header class="dock"><h2>Propriétés</h2><button aria-label="Fermer les propriétés"><svg><use href="#cross"/></svg></button></header>
    <div class="typebox">
      <div class="thumb"><svg viewBox="0 0 40 40"><path d="M2 1h24v3h12v34H16v-2H2z" fill="url(#steel)" stroke="#55585e" stroke-width="2"/><path d="M16 15h22v23H16z" fill="#f4f4f5"/><path d="M26 4v11M16 37V15h22" fill="none" stroke="#333" stroke-width="1.500" stroke-dasharray="3 1"/><path d="M16 38h22V15" fill="none" stroke="#55585e" stroke-width="2"/></svg></div>
      <span>Plan d'étage</span>
      <svg class="big-tri"><use href="#caret"/></svg>
    </div>
    <div class="typebar">
      <label class="pick"><select aria-label="Vue"><option>Plan d'étage: Niveau 0</option></select><svg><use href="#chevron"/></svg></label>
      <button class="edit"><svg viewBox="0 0 18 20"><path d="M1 3l3-2h4v7H1zM10 3l2-2h5v7h-7zM1 11h7v7H1z" fill="#eee" stroke="#333"/><path d="M9 10h8v9H9z" fill="#fff" stroke="#333"/><path d="M11 12h4v3h-4z" fill="#2f70c0"/></svg>Modifier le type</button>
    </div>
    <div class="gridwrap">
      <table>
        <colgroup><col class="c-name"><col class="c-val"><col class="c-end"></colgroup>
        <tbody>
          <tr><td>Emplacement du choix...</td><td>Arrière-plan</td><td></td></tr>
          <tr><td>Choix des couleurs</td><td><button>&lt;Aucun&gt;</button></td><td></td></tr>
          <tr><td>Choix des couleurs du s...</td><td><button>Modifier...</button></td><td></td></tr>
          <tr><td>Style d'affichage de l'a...</td><td>Aucun(e)</td><td></td></tr>
          <tr><td><label for="soleil">Trajectoire du soleil</label></td><td><input type="checkbox" id="soleil"></td><td></td></tr>
          <tr class="sec"><th colspan="2">Niveau en fond de plan</th><th><svg><use href="#collapse"/></svg></th></tr>
          <tr><td>Plage: niveau de base</td><td>Aucun(e)</td><td></td></tr>
          <tr class="ro"><td>Plage: niveau supérieur</td><td>Sans liaison</td><td></td></tr>
          <tr class="ro"><td>Orientation du niveau ...</td><td>Regarder vers le bas</td><td></td></tr>
          <tr class="sec"><th colspan="2">Etendues</th><th><svg><use href="#collapse"/></svg></th></tr>
          <tr><td><label for="cadrer">Cadrer la vue</label></td><td><input type="checkbox" id="cadrer"></td><td></td></tr>
          <tr><td><label for="zone">Zone cadrée visible</label></td><td><input type="checkbox" id="zone"></td><td></td></tr>
          <tr><td><label for="annot">Cadrage de l'annotation</label></td><td><input type="checkbox" id="annot"></td><td></td></tr>
          <tr><td>Plage de la vue</td><td><button>Modifier...</button></td><td></td></tr>
          <tr class="ro"><td>Niveau associé</td><td>Niveau 0</td><td></td></tr>
          <tr><td>Définition d'une zone</td><td>Aucun(e)</td><td></td></tr>
          <tr><td>Délimitation de la prof...</td><td><button>Aucune délimitation</button></td><td></td></tr>
          <tr class="sec"><th colspan="2">Données d'identification</th><th><svg><use href="#collapse"/></svg></th></tr>
          <tr><td>Gabarit de vue</td><td><button>&lt;Aucun&gt;</button></td><td></td></tr>
          <tr><td>Nom de la vue</td><td>Niveau 0</td><td></td></tr>
          <tr class="ro"><td>Dépendance</td><td>Indépendant</td><td></td></tr>
          <tr><td>Titre sur la feuille</td><td></td><td></td></tr>
          <tr class="ro"><td>Référencement de la fe...</td><td></td><td></td></tr>
          <tr class="ro"><td>Référencement du détail</td><td></td><td></td></tr>
          <tr class="ro"><td>Sous-projet</td><td>Vue "Plan d'étage: Nivea...</td><td></td></tr>
          <tr class="ro"><td>Modifié par</td><td></td><td></td></tr>
          <tr class="sec"><th colspan="2">Phase de construction</th><th><svg><use href="#collapse"/></svg></th></tr>
          <tr><td>Filtre des phases</td><td>Afficher tout</td><td></td></tr>
          <tr><td>Phase</td><td>Nouvelle construction</td><td></td></tr>
          <tr class="sec"><th colspan="2">Données</th><th><svg><use href="#collapse"/></svg></th></tr>
        </tbody>
      </table>
      <div class="pscroll"><i></i></div>
    </div>
    <footer class="apply"><a href="#">Aide des propriétés</a><button disabled>Appliquer</button></footer>
  </aside>
</main>

<footer class="status">
  <p>Cliquez pour sélectionner. Appuyez sur TAB pour afficher d'autres options, sur CTRL pour aj</p>
  <svg class="s-ico" viewBox="0 0 20 20"><path d="M1 8h7v10H1z" fill="#8cc4ee" stroke="#1c5c96" stroke-width="1.500"/><path d="M6 1h9v5H6z" fill="#8ccf8f" stroke="#2b7a3d" stroke-width="1.500"/><path d="M12 7v5l2 1v6h3v-6l2-1V7l-2 2h-3z" fill="#eee" stroke="#444"/></svg>
  <label class="pick sp"><select aria-label="Sous-projet actif"><option>01_CAO (non modifiable)</option></select><svg><use href="#chevron"/></svg></label>
  <button class="count"><svg viewBox="0 0 20 20"><path d="M9 1h9l-2 6h-5zM13 7v4H6v3" fill="#eee" stroke="#444" stroke-width="1.300"/><path d="M2 19q0-5 4-5t4 5z" fill="#eee" stroke="#444" stroke-width="1.300"/></svg>:0</button>
  <svg class="s-ico opt" viewBox="0 0 20 20"><path d="M1 1h18v18H1z" fill="#f4f4f4" stroke="#333" stroke-width="1.500"/><path d="M1 1h18v4H1z" fill="#3c424c"/><path d="M4 8h4v3H4zM4 13h4v3H4zM10 9h7M10 14h7" fill="none" stroke="#333" stroke-width="1.400"/></svg>
  <svg class="s-ico" viewBox="0 0 20 20"><path d="M3 1h16v18H3z" fill="#999"/><path d="M1 12h8l-3-3M9 12l-3 3" stroke="#ddd" stroke-width="2" fill="none"/></svg>
  <label class="pick op"><select aria-label="Variante" disabled><option>Modèle de base</option></select><svg><use href="#chevron"/></svg></label>
  <label class="editable"><input type="checkbox">Modifiable uniquement</label>
  <div class="seltools">
    <svg viewBox="0 0 20 20"><rect x="1" y="2" width="9" height="6" rx="3" fill="#f9e08a" stroke="#d9a013" stroke-width="2.500"/><rect x="10" y="2" width="9" height="6" rx="3" fill="#f9e08a" stroke="#d9a013" stroke-width="2.500"/><use href="#pointer" x="6" y="5" width="10" height="15"/></svg>
    <svg viewBox="0 0 20 20"><path d="M0 16L8 4h6v12z" fill="#d6e9f7"/><path d="M0 16L8 4h6M1 16h12M3 11h9" fill="none" stroke="#2d6db0" stroke-width="1.500"/><use href="#redx" x="10" y="0" width="10" height="9"/><use href="#pointer" x="10" y="5" width="10" height="15"/></svg>
    <svg viewBox="0 0 20 20"><path d="M2 1h10v3h-2v4h3v4H1V8h3V4H2z" fill="#e08030" stroke="#9c4a10"/><path d="M7 12v7" stroke="#666" stroke-width="2"/><use href="#pointer" x="10" y="5" width="10" height="15"/></svg>
    <svg viewBox="0 0 20 20"><path d="M1 5l8-4v13l-8 5z" fill="#9dcdf0" stroke="#2d6db0"/><path d="M9 2h5v12H9z" fill="#b9dcf4"/><use href="#redx" x="10" y="0" width="10" height="9"/><use href="#pointer" x="9" y="5" width="10" height="15"/></svg>
    <svg viewBox="0 0 20 20"><path d="M6 0v12M0 6h12M4 2l2-2 2 2M4 10l2 2 2-2" stroke="#222" stroke-width="1.300" fill="none"/><use href="#pointer" x="10" y="5" width="10" height="15"/></svg>
    <svg viewBox="0 0 20 20"><circle cx="10" cy="10" r="6.500" fill="none" stroke="#999" stroke-width="4" stroke-dasharray="4 1"/></svg>
    <svg viewBox="0 0 20 20"><path d="M1 2h18v2l-7 7v8l-4-2v-6L1 4z" fill="url(#steel)" stroke="#444" stroke-width="1.300"/></svg>
    <span>:0</span>
  </div>
</footer>
</body>
</html>
```
FILE: styles.css
```css
* { box-sizing: border-box; }
body {
  margin: 0;
  height: 100vh;
  display: flex;
  flex-direction: column;
  overflow: hidden;
  background: #eee;
  color: #222;
  font: 14px/20px "Open Sans", "Noto Sans", sans-serif;
}
h1, h2, p, ul { margin: 0; padding: 0; font: inherit; }
button { border: 0; padding: 0; background: none; color: inherit; font: inherit; }
a { color: inherit; text-decoration: none; }
svg { flex: none; }
.defs { position: absolute; }
.tri { width: 8px; height: 6px; color: #444; }
.tri.dark { color: #000; }

/* title bar */
.titlebar { display: flex; height: 37px; background: #cbcbcb; align-items: flex-start; }
.quick { width: 685px; display: flex; align-items: center; height: 32px; padding-left: 6px; gap: 9px; flex: none; }
.quick .tri { margin-right: -1px; }
.qb { width: 20px; height: 20px; flex: none; }
.qb svg { width: 20px; height: 20px; display: block; }
.qb.logo { margin-right: 2px; width: 22px; }
.qb.logo svg { width: 22px; height: 26px; margin-top: -3px; }
.quick .wide { margin-left: 5px; }
.vsep { width: 1px; height: 28px; background: #b0b0b0; flex: none; }
.menu-glyph { width: 10px; height: 9px; }
.titlebar h1 { font-family: "Noto Sans", sans-serif; line-height: 26px; white-space: nowrap; flex: 1; min-width: 0; }
.account { display: flex; align-items: center; height: 32px; gap: 11px; width: 281px; flex: none; }
.left-tri { width: 6px; height: 10px; }
.login { display: flex; gap: 7px; align-items: center; white-space: nowrap; margin-right: 9px; }
.login svg { width: 20px; height: 20px; }
.winctl { display: flex; align-items: center; justify-content: space-between; height: 32px; width: 97px; padding: 0 9px 0 10px; flex: none; margin-left: 65px; }
.winctl svg { display: block; width: 15px; height: 15px; }

/* ribbon tabs */
.tabs { display: flex; height: 25px; background: #cbcbcb; padding-left: 1px; line-height: 25px; }
.tabs a { padding: 0 12px; white-space: nowrap; color: #333; }
.tabs a.file { background: #2a7ab2; color: #fff; margin-right: 1px; }
.tabs a.active { background: #eee; color: #111; margin-right: 2px; }
.minribbon { display: flex; align-items: center; gap: 6px; margin-left: 30px; }
.minribbon > svg:first-child { width: 20px; height: 13px; }

/* ribbon panels */
.ribbon { display: flex; height: 121px; border-bottom: 1px solid #c8c8c8; padding-left: 1px; }
.panel { display: flex; flex-direction: column; border-right: 1px solid #dcdcdc; padding: 4px 2px 0 1px; height: 119px; }
.panel:last-child { border: 0; }
.tools { display: grid; height: 90px; margin-bottom: 4px; }
.tools button { display: flex; flex-direction: column; align-items: center; white-space: nowrap; }
.tools button:first-child { padding-right: 4px; }
.tools button:last-child { padding-left: 3px; }
.tools button + button { border-left: 1px solid #ccc; }
.p-cloud .tools button + button { border: 0; }
.tools button > svg:first-child { width: 40px; height: 40px; margin: 3px 0 5px; }
.tools .tri { margin-top: 2px; }
.tools button:disabled { color: #b0b0b0; }
.panel h2 { text-align: center; line-height: 21px; height: 21px; color: #333; }
.p-data .tools { grid-template-columns: 79px 82px 76px; }
.p-data h2 { background: #e4e0ef; }
.p-views .tools { grid-template-columns: 79px 74px; }
.p-views h2 { background: #e0eed9; }
.p-manage .tools { grid-template-columns: 104px 101px; }
.p-manage h2 { background: #d5dbe4; }
.p-find .tools { grid-template-columns: 75px 84px; }
.p-find h2 { background: #dceaf6; }
.p-utility .tools { grid-template-columns: 86px; }
.p-utility h2 { background: #fff0cb; }
.p-cloud .tools { grid-template-columns: 182px 59px 58px 84px 123px 181px 68px; }
.p-cloud h2 { background: #ffe9e7; }
.digits { font: bold 11px "Open Sans", sans-serif; fill: #555; }
.optionbar { height: 33px; }

/* workspace */
.workspace { flex: 1; min-height: 0; display: grid; grid-template-columns: 506px minmax(0, 1fr) 390px; border-top: 2px solid #cbcbcb; }
.dock { display: flex; height: 25px; align-items: center; justify-content: space-between; padding: 0 4px 0 2px; line-height: 25px; color: #444; }
.dock button { height: 14px; color: #222; }
.dock svg { width: 13px; height: 13px; display: block; }
.browser { display: flex; flex-direction: column; border-right: 2px solid #cbcbcb; padding: 0 3px 3px 2px; min-height: 0; font-family: "Noto Sans", sans-serif; }
.tree { flex: 1; background: #fff; color: #000; overflow: hidden; }
.tree, .tree ul { list-style: none; }
.tree ul { margin-left: 26px; }
.tree.root { margin-left: -2px; border-left: 2px solid #eee; }
.tree li { position: relative; }
.tree li::before { content: ""; position: absolute; left: 10px; top: 0; bottom: 0; border-left: 1px dotted #888; }
.tree li:last-child::before { bottom: auto; height: 11px; }
.root > li:first-child::before { top: 11px; }
.row { position: relative; display: flex; align-items: center; height: 22px; padding-left: 4px; white-space: nowrap; }
.row::before { content: ""; position: absolute; left: 10px; top: 11px; width: 19px; border-top: 1px dotted #888; }
.row.leaf { padding-left: 32px; }
.row b { background: #e2e2e2; margin-left: -3px; padding: 0 3px; line-height: 22px; font-family: "Open Sans", sans-serif; }
.ex { position: relative; width: 13px; height: 13px; margin-right: 15px; border: 1px solid #888; border-radius: 1px; background: linear-gradient(#fff, #ddd); color: #2f55a5; font: 14px/11px "DejaVu Sans", sans-serif; display: flex; align-items: center; justify-content: center; }
.ico { width: 20px; height: 20px; margin-right: 6px; position: relative; background: #fff; }
.root > li > .row .ex { margin-right: 9px; }
.root > li > .row.leaf { padding-left: 26px; }
.root > li > .row::before { width: 15px; }

/* view area */
.viewport { display: flex; flex-direction: column; min-width: 0; min-height: 0; }
.viewtabs { display: flex; height: 25px; background: #cbcbcb; line-height: 25px; }
.viewtabs a { display: flex; align-items: center; gap: 9px; padding: 0 6px; color: #333; white-space: nowrap; }
.viewtabs svg { width: 20px; height: 19px; }
.t-elev { width: 167px; }
.t-plan { width: 160px; }
.t-sched { width: 232px; }
.t-last { flex: 1; }
.viewtabs .on { background: #fff; font-weight: 700; }
.viewtabs .x { width: 13px; height: 13px; margin-left: auto; color: #222; }
.viewtabs button { width: 28px; }
.viewtabs button svg { width: 10px; height: 9px; }
.stage { flex: 1; display: flex; min-height: 0; }
.canvas { flex: 1; min-width: 0; position: relative; background: #fff; }
.drawing { display: block; width: 100%; height: 100%; }
.navbar { position: absolute; right: 1px; top: 3px; }
.navbar svg { width: 35px; height: 117px; display: block; }
.twod { font: bold 9px "Open Sans", sans-serif; fill: #6d9cc9; }
.vscroll { width: 24px; border-right: 4px solid #cbcbcb; display: flex; align-items: center; padding-left: 7px; }
.vscroll i { width: 6px; height: 20px; background: #888; }
.viewbar { display: flex; align-items: center; height: 23px; border-right: 4px solid #cbcbcb; border-bottom: 3px solid #e2e2e2; padding: 0 4px 0 29px; }
.scale { width: 65px; text-align: left; color: #000; font-size: 13px; }
.viewicons { display: flex; gap: 5px; }
.viewicons svg { width: 20px; height: 18px; }
.hscroll { flex: 1; padding-left: 295px; }
.hscroll i { display: block; width: 21px; height: 6px; background: #888; }
.grip { width: 12px; height: 12px; }

/* properties */
.props { display: flex; flex-direction: column; min-height: 0; padding-left: 3px; }
.typebox { display: flex; align-items: center; height: 87px; border: 1px solid #d2d2d2; border-bottom: 0; padding: 0 2px 0 3px; gap: 6px; color: #333; background: #efefef; }
.thumb { width: 82px; height: 82px; border: 1px solid #ccc; display: grid; place-items: center; }
.thumb svg { width: 40px; height: 40px; }
.big-tri { width: 10px; height: 7px; margin-left: auto; color: #222; }
.typebar { display: flex; height: 30px; gap: 6px; padding: 1px 0; }
.pick { position: relative; display: block; }
.pick select { appearance: none; width: 100%; height: 100%; border: 1px solid #ccc; border-radius: 0; background: #fff; color: #000; font: inherit; padding: 0 2px; display: block; }
.pick svg { position: absolute; right: 8px; top: 50%; margin-top: -3px; width: 10px; height: 6px; color: #444; }
.typebar .pick { width: 244px; }
.edit { display: flex; align-items: center; gap: 4px; height: 24px; white-space: nowrap; color: #000; }
.edit svg { width: 18px; height: 18px; }
.gridwrap { flex: 1; min-height: 0; display: flex; overflow: hidden; }
table { border-collapse: separate; border-spacing: 0; table-layout: fixed; width: 365px; height: 0; background: #fff; color: #000; }
.c-name { width: 175px; }
.c-val { width: 175px; }
.c-end { width: 15px; }
td, th { height: 24px; padding: 0; border-bottom: 1px dotted #666; border-right: 1px dotted #666; font-weight: 400; text-align: left; line-height: 20px; white-space: nowrap; overflow: hidden; vertical-align: middle; }
td { padding-bottom: 2px; }
td:first-child { padding-left: 10px; }
td + td { padding-left: 2px; }
td button { display: block; width: 172px; height: 21px; margin: 1px 0 -1px; line-height: 18px; background: #fdfdfd; border: 1px solid #ccc; border-bottom: 2px solid #bbb; border-radius: 3px; color: #000; }
.ro { color: #808080; }
.sec th { background: #dadada; border-color: transparent; padding-left: 2px; color: #222; background-clip: border-box; }
.sec svg { width: 8px; height: 9px; display: block; margin-bottom: 6px; }
input[type="checkbox"] { appearance: none; display: block; width: 16px; height: 16px; margin: 0; border: 1px solid #666; border-radius: 3px; background: #f4f4f4; }
.pscroll { flex: 1; padding: 189px 8px 0 8px; }
.pscroll i { display: block; width: 6px; height: 440px; background: #888; }
.apply { display: flex; justify-content: space-between; height: 33px; padding: 3px 4px 0 2px; }
.apply a { color: #0a66cc; text-decoration: underline; }
.apply button { width: 84px; height: 24px; background: #fafafa; border: 1px solid #e2e2e2; border-radius: 3px; color: #888; }

/* status bar */
.status { display: flex; align-items: center; height: 30px; background: #cbcbcb; padding: 3px 2px 0; color: #000; white-space: nowrap; flex: none; }
.status p { width: 596px; }
.s-ico { width: 20px; height: 20px; margin: 0 7px; }
.status .pick { height: 23px; flex: none; width: 254px; }
.status .pick select { border: 0; }
.status .op select { background: #e9e9e9; color: #808080; opacity: 1; }
.status .op svg { color: #aaa; }
.count { display: flex; align-items: center; width: 69px; gap: 5px; padding-left: 9px; }
.count svg, .seltools svg { width: 20px; height: 20px; }
.s-ico.opt { margin: 0 4px 0 0; }
.editable { display: flex; align-items: center; gap: 4px; margin-left: 174px; width: 191px; }
.editable input { width: 18px; height: 18px; border-radius: 0; }
.seltools { display: flex; align-items: center; gap: 10px; }
.seltools span { margin-left: -9px; }
```
